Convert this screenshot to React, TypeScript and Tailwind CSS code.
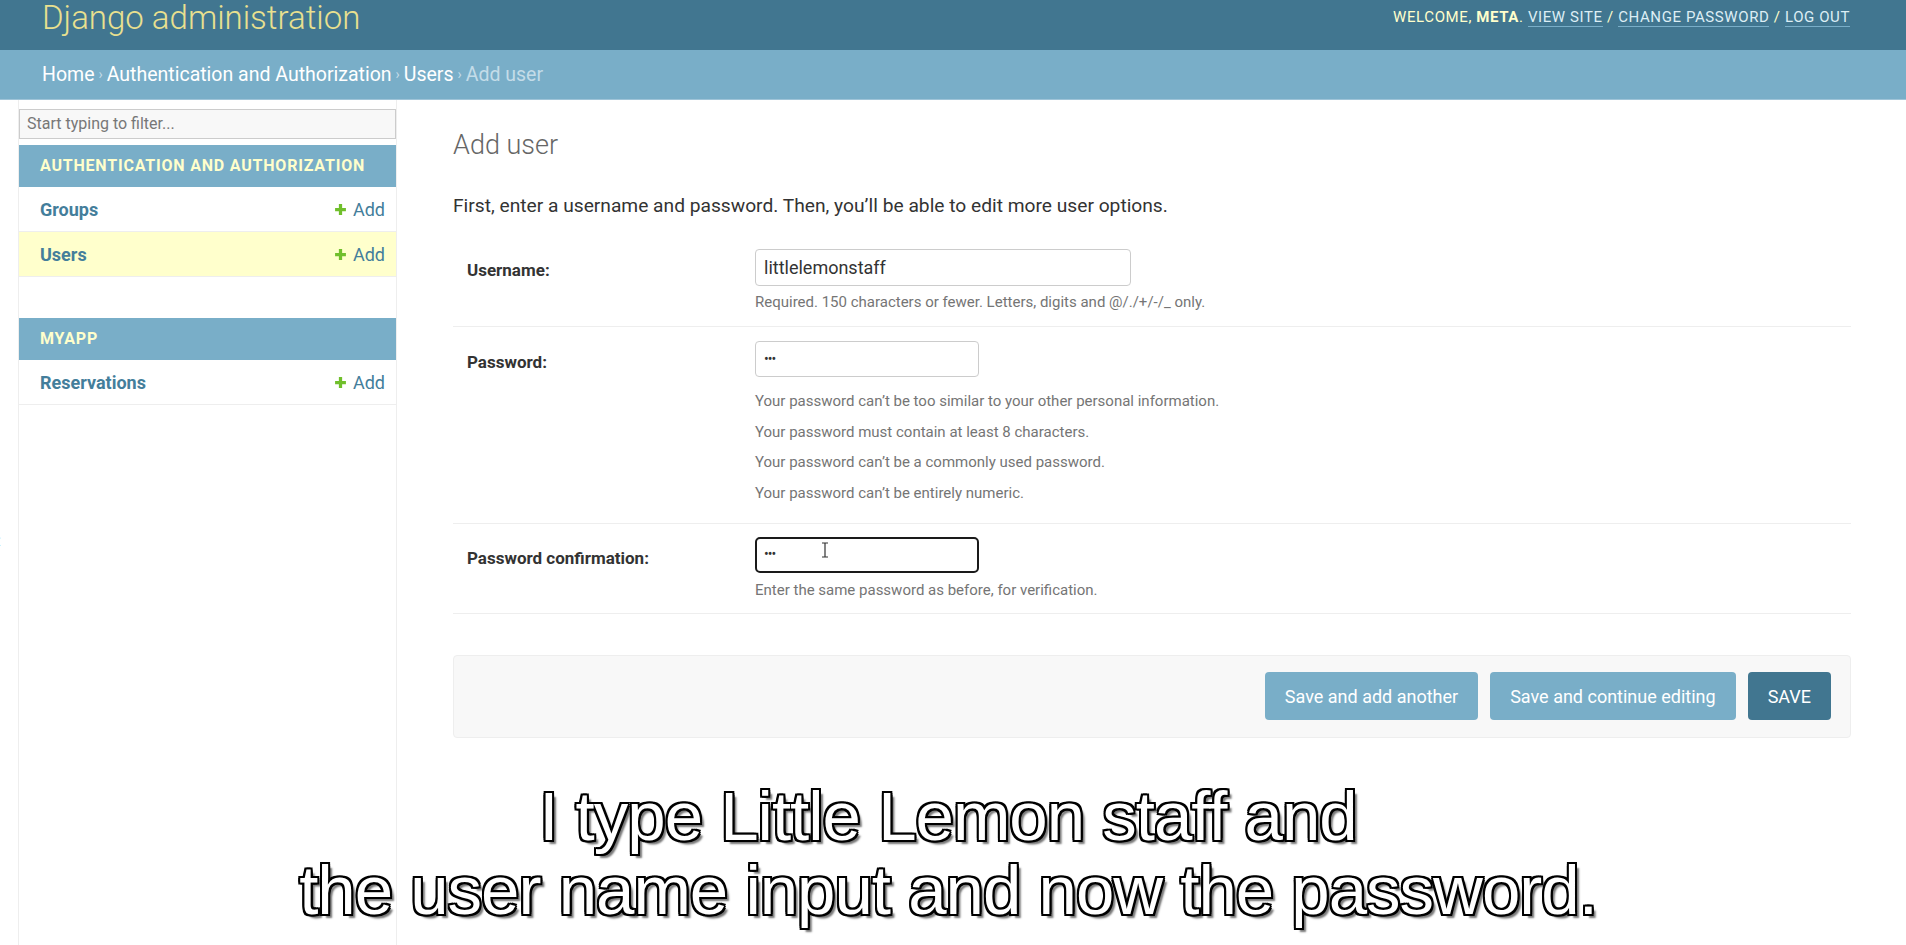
const PlusIcon = () => (
  <svg width="13" height="13" viewBox="0 0 12 12" className="inline-block mr-[6px] mb-[2px]">
    <path d="M6 1v10M1 6h10" stroke="#70bf2b" strokeWidth="3" />
  </svg>
);

const SidebarRow = ({ name, active }: { name: string; active?: boolean }) => (
  <div
    className={`flex items-center justify-between h-[45px] pl-[21px] pr-[11px] border-b border-[#eee] text-[18px] ${
      active ? 'bg-[#ffffcc]' : 'bg-white'
    }`}
  >
    <span className="font-bold text-[#447e9b]">{name}</span>
    <span className="text-[#447e9b]">
      <PlusIcon />
      Add
    </span>
  </div>
);

const Caption = ({ children }: { children: React.ReactNode }) => (
  <div className="h-[42px] flex items-center pl-[21px] bg-[#79aec8] text-[#ffffcc] font-bold text-[16px] tracking-[0.8px] uppercase">
    {children}
  </div>
);

const HelpLine = ({ children }: { children: React.ReactNode }) => (
  <div className="text-[15px] leading-[20px] text-[#757575]">{children}</div>
);

export default function App() {
  return (
    <div className="relative min-h-[945px] bg-white font-[Roboto,sans-serif] overflow-hidden">
      {/* header */}
      <header className="h-[50px] bg-[#417690] flex items-start justify-between pl-[42px] pr-[56px]">
        <div className="text-[33px] font-light leading-[36px] text-[#e9e08f]">Django administration</div>
        <div className="pt-[7px] text-[15px] uppercase tracking-[0.6px] text-[#ffffcc] leading-[20px]">
          Welcome, <span className="font-bold">Meta</span>.{' '}
          <span className="text-[#ddeef5] border-b border-[#79aec8]">View site</span> /{' '}
          <span className="text-[#ddeef5] border-b border-[#79aec8]">Change password</span> /{' '}
          <span className="text-[#ddeef5] border-b border-[#79aec8]">Log out</span>
        </div>
      </header>

      {/* breadcrumbs */}
      <div className="h-[50px] bg-[#79aec8] flex items-center pl-[42px] text-[19.5px] text-white border-b border-[#9fc4d8]">
        <span>Home</span>
        <span className="mx-[4px] text-[#c4dce8] text-[14px]">›</span>
        <span>Authentication and Authorization</span>
        <span className="mx-[4px] text-[#c4dce8] text-[14px]">›</span>
        <span>Users</span>
        <span className="mx-[4px] text-[#c4dce8] text-[14px]">›</span>
        <span className="text-[#c4dce8]">Add user</span>
      </div>

      <div className="flex min-h-[845px]">
        {/* sidebar toggle */}
        <div className="w-[19px] shrink-0 overflow-hidden border-r border-[#eee] flex flex-col">
          <div className="mt-[430px] -ml-[9px] text-[22px] leading-[22px] text-[#79aec8]">«</div>
        </div>

        {/* sidebar */}
        <aside className="w-[378px] shrink-0 border-r border-[#eee]">
          <div className="pt-[9px] pb-[6px]">
            <div className="h-[30px] border border-[#ccc] bg-[#f8f8f8] flex items-center pl-[7px] text-[16px] text-[#777]">
              Start typing to filter...
            </div>
          </div>
          <Caption>Authentication and Authorization</Caption>
          <SidebarRow name="Groups" />
          <SidebarRow name="Users" active />
          <div className="h-[41px]" />
          <Caption>Myapp</Caption>
          <SidebarRow name="Reservations" />
        </aside>

        {/* content */}
        <main className="flex-1 pl-[56px] pr-[55px] pt-[28px] relative">
          <h1 className="text-[27px] font-light text-[#666] leading-[34px]">Add user</h1>
          <p className="mt-[32px] text-[19.2px] leading-[24px] text-[#333]">
            First, enter a username and password. Then, you’ll be able to edit more user options.
          </p>

          <div className="mt-[17px]">
            {/* username */}
            <div className="flex border-b border-[#eee] pt-[14px] pb-[14px]">
              <div className="w-[302px] shrink-0 pl-[14px] pt-[9px] text-[17px] font-bold text-[#333]">Username:</div>
              <div>
                <div className="w-[376px] h-[37px] border border-[#ccc] rounded-[4px] flex items-center pl-[8px] text-[18px] text-[#333]">
                  littlelemonstaff
                </div>
                <div className="mt-[6px]">
                  <HelpLine>Required. 150 characters or fewer. Letters, digits and @/./+/-/_ only.</HelpLine>
                </div>
              </div>
            </div>

            {/* password */}
            <div className="flex border-b border-[#eee] pt-[14px] pb-[20px]">
              <div className="w-[302px] shrink-0 pl-[14px] pt-[9px] text-[17px] font-bold text-[#333]">Password:</div>
              <div>
                <div className="w-[224px] h-[36px] border border-[#ccc] rounded-[4px] flex items-center pl-[8px] text-[14px] tracking-[-1px] text-[#333]">
                  •••
                </div>
                <div className="mt-[14px] flex flex-col gap-[10.5px]">
                  <HelpLine>Your password can’t be too similar to your other personal information.</HelpLine>
                  <HelpLine>Your password must contain at least 8 characters.</HelpLine>
                  <HelpLine>Your password can’t be a commonly used password.</HelpLine>
                  <HelpLine>Your password can’t be entirely numeric.</HelpLine>
                </div>
              </div>
            </div>

            {/* password confirmation */}
            <div className="flex border-b border-[#eee] pt-[13px] pb-[13px]">
              <div className="w-[302px] shrink-0 pl-[14px] pt-[9px] text-[17px] font-bold text-[#333]">Password confirmation:</div>
              <div>
                <div className="relative w-[224px] h-[36px] border-[2.5px] border-[#1a1a1a] rounded-[5px] flex items-center pl-[7px] text-[14px] tracking-[-1px] text-[#333]">
                  •••
                  <svg width="8" height="16" viewBox="0 0 8 16" className="absolute left-[64px] top-[3px]">
                    <path d="M1 1h6M4 1v14M1 15h6" stroke="#333" strokeWidth="1.2" fill="none" />
                  </svg>
                </div>
                <div className="mt-[7px]">
                  <HelpLine>Enter the same password as before, for verification.</HelpLine>
                </div>
              </div>
            </div>
          </div>

          {/* submit row */}
          <div className="mt-[41px] h-[83px] bg-[#f8f8f8] border border-[#eee] rounded-[4px] flex items-center justify-end gap-[12px] pr-[19px]">
            <div className="h-[48px] px-[20px] flex items-center rounded-[4px] bg-[#79aec8] text-white text-[18px]">
              Save and add another
            </div>
            <div className="h-[48px] px-[20px] flex items-center rounded-[4px] bg-[#79aec8] text-white text-[18px]">
              Save and continue editing
            </div>
            <div className="h-[48px] px-[20px] flex items-center rounded-[4px] bg-[#417690] text-white text-[18px]">
              SAVE
            </div>
          </div>
        </main>
      </div>

      {/* subtitles */}
      <div className="absolute left-0 right-[10px] top-[780px] text-center font-['Liberation_Sans',Arial,sans-serif] text-[69px] leading-[74px] text-white tracking-[-1px] [text-shadow:-2px_-2px_0_#000,2px_-2px_0_#000,-2px_2px_0_#000,2px_2px_0_#000,0_2px_0_#000,0_-2px_0_#000,2px_0_0_#000,-2px_0_0_#000,4px_4px_2px_#777]">
        <div>I type Little Lemon staff and</div>
        <div>the user name input and now the password.</div>
      </div>
    </div>
  );
}
